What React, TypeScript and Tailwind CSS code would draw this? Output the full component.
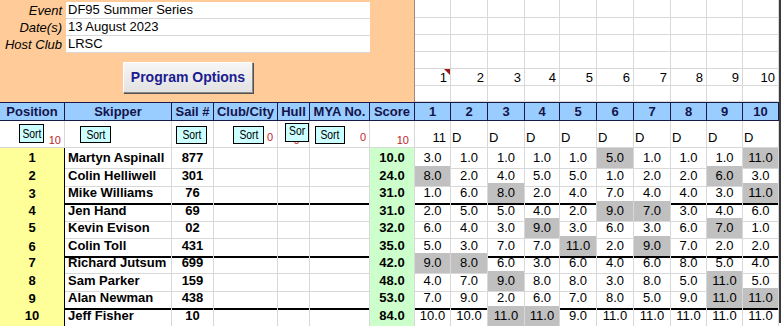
import React from "react";

const COLS =
  "grid grid-cols-[65px_107px_42px_64px_32px_60px_45px_36px_37px_37px_35px_37px_37px_37px_36px_36px_36px]";
const RACE_COLS =
  "grid grid-cols-[36px_37px_37px_35px_37px_37px_37px_36px_36px_36px]";

const info = [
  ["Event", "DF95 Summer Series"],
  ["Date(s)", "13 August 2023"],
  ["Host Club", "LRSC"],
];

const headers = ["Position", "Skipper", "Sail #", "Club/City", "Hull", "MYA No.", "Score"];

const rows = [
  { name: "Martyn Aspinall", sail: "877", score: "10.0", r: ["3.0", "1.0", "1.0", "1.0", "1.0", "5.0", "1.0", "1.0", "1.0", "11.0"], d: [5, 9] },
  { name: "Colin Helliwell", sail: "301", score: "24.0", r: ["8.0", "2.0", "4.0", "5.0", "5.0", "1.0", "2.0", "2.0", "6.0", "3.0"], d: [0, 8] },
  { name: "Mike Williams", sail: "76", score: "31.0", r: ["1.0", "6.0", "8.0", "2.0", "4.0", "7.0", "4.0", "4.0", "3.0", "11.0"], d: [2, 9] },
  { name: "Jen Hand", sail: "69", score: "31.0", r: ["2.0", "5.0", "5.0", "4.0", "2.0", "9.0", "7.0", "3.0", "4.0", "6.0"], d: [5, 6] },
  { name: "Kevin Evison", sail: "02", score: "32.0", r: ["6.0", "4.0", "3.0", "9.0", "3.0", "6.0", "3.0", "6.0", "7.0", "1.0"], d: [3, 8] },
  { name: "Colin Toll", sail: "431", score: "35.0", r: ["5.0", "3.0", "7.0", "7.0", "11.0", "2.0", "9.0", "7.0", "2.0", "2.0"], d: [4, 6] },
  { name: "Richard Jutsum", sail: "699", score: "42.0", r: ["9.0", "8.0", "6.0", "3.0", "6.0", "4.0", "6.0", "8.0", "5.0", "4.0"], d: [0, 1] },
  { name: "Sam Parker", sail: "159", score: "48.0", r: ["4.0", "7.0", "9.0", "8.0", "8.0", "3.0", "8.0", "5.0", "11.0", "5.0"], d: [2, 8] },
  { name: "Alan Newman", sail: "438", score: "53.0", r: ["7.0", "9.0", "2.0", "6.0", "7.0", "8.0", "5.0", "9.0", "11.0", "11.0"], d: [8, 9] },
  { name: "Jeff Fisher", sail: "10", score: "84.0", r: ["10.0", "10.0", "11.0", "11.0", "9.0", "11.0", "11.0", "11.0", "11.0", "11.0"], d: [2, 3] },
];

const raceNums = [1, 2, 3, 4, 5, 6, 7, 8, 9, 10];

function SortBtn({ label = "Sort", className }: { label?: string; className: string }) {
  return (
    <div
      className={
        "absolute bg-[#ccffff] border border-black text-[13px] leading-[14px] flex justify-center " +
        className
      }
    >
      <span className="inline-block scale-x-[0.8]">{label}</span>
    </div>
  );
}

function Red({ v }: { v: string }) {
  return <span className="text-[11px] leading-[12px] text-[#c0262b]">{v}</span>;
}

export default function App() {
  return (
    <div className="w-[784px] h-[326px] overflow-hidden bg-white text-[13px] text-black font-['Liberation_Sans',Arial,sans-serif]">
      <div className="w-[781px] border-r-2 border-r-[#3c3c3c]">
        {/* event info + options */}
        <div className="flex h-[102px]">
          <div className="w-[415px] bg-[#ffcc99] border-r border-r-[#a08a78] pt-[2px]">
            {info.map(([label, value]) => (
              <div key={label} className="flex h-[17px]">
                <div className="w-[66px] pr-[4px] text-right italic leading-[17px]">{label}</div>
                <div className="w-[304px] bg-white border-b border-b-[#d8d8d8] pl-[2px] leading-[16px]">
                  {value}
                </div>
              </div>
            ))}
            <div className="pl-[123px] pt-[9px]">
              <button className="w-[130px] h-[31px] bg-gradient-to-b from-[#f6f6f6] to-[#e2e2e2] border border-t-white border-l-white border-r-[#8a8a8a] border-b-[#8a8a8a] shadow-[1px_1px_0_#505050] text-[14px] font-bold text-[#1c1c90]">
                Program Options
              </button>
            </div>
          </div>
          <div className={RACE_COLS + " w-[364px] grid-rows-[18px_17px_17px_17px_17px_16px]"}>
            {Array.from({ length: 60 }).map((_, i) => {
              const row = Math.floor(i / 10);
              const col = i % 10;
              return (
                <div
                  key={i}
                  className="relative border-r border-b border-[#d8d8d8] flex items-end justify-end pr-[3px] leading-[15px]"
                >
                  {row === 4 ? raceNums[col] : null}
                  {row === 4 && col === 0 ? (
                    <span className="absolute top-0 right-0 w-0 h-0 border-t-[6px] border-l-[6px] border-t-[#a01818] border-l-transparent" />
                  ) : null}
                </div>
              );
            })}
          </div>
        </div>

        {/* column headers */}
        <div className={COLS + " h-[19px] bg-[#99ccff] border-y border-y-[#1a1a48] font-bold text-[#14144a]"}>
          {headers.map((h) => (
            <div key={h} className="border-r border-r-[#1a1a48] flex items-center justify-center leading-[16px]">
              {h}
            </div>
          ))}
          {raceNums.map((n) => (
            <div key={n} className="border-r border-r-[#1a1a48] flex items-center justify-center leading-[16px]">
              {n}
            </div>
          ))}
        </div>

        {/* sort row */}
        <div className={COLS + " h-[27px]"}>
          <div className="relative border-r border-b border-[#d8d8d8] flex items-end justify-end pr-[3px] pb-[1px]">
            <SortBtn className="left-[19px] top-[3px] w-[25px] h-[19px] items-center" />
            <Red v="10" />
          </div>
          <div className="relative border-r border-b border-[#d8d8d8]">
            <SortBtn className="left-[15px] top-[5px] w-[31px] h-[17px] items-center" />
          </div>
          <div className="relative border-r border-b border-[#d8d8d8]">
            <SortBtn className="left-[4px] top-[5px] w-[31px] h-[18px] items-center" />
          </div>
          <div className="relative border-r border-b border-[#d8d8d8] flex items-end justify-end pr-[4px] pb-[4px]">
            <SortBtn className="left-[19px] top-[5px] w-[31px] h-[18px] items-center" />
            <Red v="0" />
          </div>
          <div className="relative border-r border-b border-[#d8d8d8] flex items-end justify-center pl-[6px] pb-[1px]">
            <Red v="0" />
            <SortBtn label="Sor" className="left-[7px] top-[2px] w-[24px] h-[19px] items-start" />
          </div>
          <div className="relative border-r border-b border-[#d8d8d8] flex items-end justify-end pr-[3px] pb-[4px]">
            <SortBtn className="left-[5px] top-[5px] w-[30px] h-[18px] items-center" />
            <Red v="0" />
          </div>
          <div className="border-r border-b border-[#d8d8d8] flex items-end justify-end pr-[5px] pb-[1px]">
            <Red v="10" />
          </div>
          {raceNums.map((n) => (
            <div
              key={n}
              className={
                "border-r border-b border-[#d8d8d8] flex items-end pb-[2px] leading-[15px] " +
                (n === 1 ? "justify-end pr-[4px]" : "justify-start pl-[1px]")
              }
            >
              {n === 1 ? "11" : "D"}
            </div>
          ))}
        </div>

        {/* results */}
        {rows.map((row, i) => {
          const thick = i === 2 || i === 5 || i === 8;
          const last = i === 9;
          const h = i % 2 === 0 ? "h-[18px]" : "h-[17px]";
          const bottom = last
            ? "border-b-2 border-b-[#202020]"
            : thick
            ? "border-b-2 border-b-black"
            : "border-b border-b-[#d8d8d8]";
          const cell = "border-r border-r-[#d8d8d8] flex items-center " + bottom;
          return (
            <div key={row.name} className={COLS + " " + h}>
              <div
                className={
                  "bg-[#ffff99] border-r border-r-black flex items-center justify-center font-bold " +
                  (last ? "border-b-2 border-b-[#202020]" : "border-b border-b-[#e2e2a8]")
                }
              >
                {i + 1}
              </div>
              <div className={cell + " pl-[3px] font-bold"}>{row.name}</div>
              <div className={cell + " justify-center font-bold"}>{row.sail}</div>
              <div className={cell} />
              <div className={cell} />
              <div className={cell} />
              <div className={cell + " justify-center font-bold bg-[#ccffcc]"}>{row.score}</div>
              {row.r.map((v, j) => (
                <div
                  key={j}
                  className={cell + " justify-center " + (row.d.includes(j) ? "bg-[#c0c0c0]" : "")}
                >
                  {v}
                </div>
              ))}
            </div>
          );
        })}
      </div>
    </div>
  );
}
